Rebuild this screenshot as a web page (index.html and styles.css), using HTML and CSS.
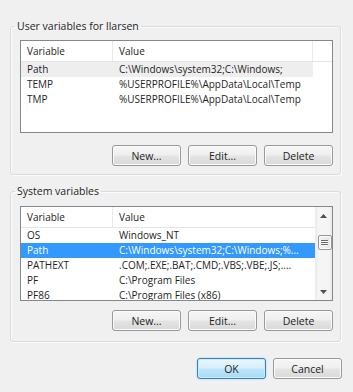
FILE: index.html
```html
<!DOCTYPE html>
<html>
<head>
<meta charset="utf-8">
<link rel="stylesheet" href="styles.css">
</head>
<body>
<div class="dialog">
  <fieldset class="group group-user">
    <legend>User variables for llarsen</legend>
    <div class="list list-user">
      <div class="lv-body">
        <div class="lv-header"><span class="c1">Variable</span><span class="c2">Value</span><span class="c3"></span></div>
        <div class="row hot"><span class="c1">Path</span><span class="c2">C:\Windows\system32;C:\Windows;</span></div>
        <div class="row"><span class="c1">TEMP</span><span class="c2">%USERPROFILE%\AppData\Local\Temp</span></div>
        <div class="row"><span class="c1">TMP</span><span class="c2">%USERPROFILE%\AppData\Local\Temp</span></div>
      </div>
    </div>
    <div class="buttons">
      <button class="btn">New...</button>
      <button class="btn">Edit...</button>
      <button class="btn">Delete</button>
    </div>
  </fieldset>

  <fieldset class="group group-system">
    <legend>System variables</legend>
    <div class="list list-system">
      <div class="lv-body">
        <div class="lv-header"><span class="c1">Variable</span><span class="c2">Value</span></div>
        <div class="row"><span class="c1">OS</span><span class="c2">Windows_NT</span></div>
        <div class="row selected"><span class="c1">Path</span><span class="c2">C:\Windows\system32;C:\Windows;%...</span></div>
        <div class="row"><span class="c1">PATHEXT</span><span class="c2">.COM;.EXE;.BAT;.CMD;.VBS;.VBE;.JS;....</span></div>
        <div class="row"><span class="c1">PF</span><span class="c2">C:\Program Files</span></div>
        <div class="row"><span class="c1">PF86</span><span class="c2">C:\Program Files (x86)</span></div>
      </div>
      <div class="scrollbar">
        <div class="sb-arrow">
          <svg width="7" height="4" viewBox="0 0 7 4"><path d="M0 4 L3.5 0 L7 4 Z" fill="#505050"/></svg>
        </div>
        <div class="sb-track">
          <div class="sb-thumb"><span class="grip"></span><span class="grip"></span><span class="grip"></span></div>
        </div>
        <div class="sb-arrow">
          <svg width="7" height="4" viewBox="0 0 7 4"><path d="M0 0 L7 0 L3.5 4 Z" fill="#505050"/></svg>
        </div>
      </div>
    </div>
    <div class="buttons">
      <button class="btn">New...</button>
      <button class="btn">Edit...</button>
      <button class="btn">Delete</button>
    </div>
  </fieldset>

  <div class="footer">
    <button class="btn btn-default">OK</button>
    <button class="btn">Cancel</button>
  </div>
</div>
</body>
</html>
```

FILE: styles.css
```css
* { box-sizing: border-box; }

html, body {
  margin: 0;
  padding: 0;
  background: #f0f0f0;
}

body {
  width: 353px;
  height: 392px;
  overflow: hidden;
  font-family: "Open Sans", "Noto Sans", sans-serif;
  font-size: 10px;
  color: #1e1e1e;
}

.dialog {
  padding: 19px 12px 0 10px;
}

.group {
  margin: 0;
  padding: 7px 7px 8px 9px;
  border: 1px solid #d9dcdf;
  border-radius: 3px;
  box-shadow: inset 1px 1px 0 #fbfbfb, 1px 1px 0 #fbfbfb;
  min-width: 0;
}

.group-system {
  margin-top: 9px;
  padding-top: 8px;
  padding-bottom: 10px;
}

.group legend {
  padding: 0 2px;
  margin-left: -5px;
  line-height: 14px;
  font-size: 10.5px;
  color: #1e1e1e;
}

.list {
  display: flex;
  background: #fff;
  border: 1px solid #828790;
  overflow: hidden;
}

.list-user { height: 93px; }
.list-system { height: 95px; }

.lv-body {
  flex: 1;
  min-width: 0;
}

.lv-header {
  display: flex;
  height: 21px;
  align-items: center;
  border-bottom: 1px solid #e5e5e5;
  background: #fff;
}

.lv-header span {
  height: 100%;
  display: flex;
  align-items: center;
  border-right: 1px solid #eaeaea;
}

.lv-header .c3 {
  flex: 1;
  border-right: none;
}

.c1 {
  width: 92px;
  padding-left: 6px;
  flex: none;
}

.c2 {
  width: 200px;
  padding-left: 6px;
  flex: none;
  white-space: nowrap;
  overflow: hidden;
}

.row {
  display: flex;
  height: 15px;
  line-height: 15px;
  white-space: nowrap;
}

.list-system .row .c2 { width: 203px; }
.list-system .lv-header .c2 { width: 203px; border-right: none; }

.row.hot {
  background: #eeeeee;
  width: 292px;
}

.row.selected {
  background: #3399ff;
  color: #fff;
}

.scrollbar {
  width: 17px;
  flex: none;
  display: flex;
  flex-direction: column;
  background: linear-gradient(to right, #eaeaea, #f5f5f5 20%, #f5f5f5 80%, #eaeaea);
}

.sb-arrow {
  height: 17px;
  display: flex;
  align-items: center;
  justify-content: center;
}

.sb-track {
  flex: 1;
  padding-top: 11px;
  display: flex;
  flex-direction: column;
  align-items: center;
}

.sb-thumb {
  width: 14px;
  height: 15px;
  margin-left: 2px;
  border: 1px solid #979797;
  border-radius: 2px;
  background: linear-gradient(to right, #f2f2f2, #e4e4e4);
  box-shadow: inset 0 0 0 1px #fafafa;
  display: flex;
  flex-direction: column;
  align-items: center;
  justify-content: center;
  gap: 1px;
}

.grip {
  width: 7px;
  height: 1px;
  background: #6a6a6a;
  box-shadow: 0 1px 0 #fff;
}

.buttons {
  display: flex;
  justify-content: flex-end;
  gap: 7px;
  margin-top: 12px;
}

.group-system .buttons { margin-top: 9px; }

.btn {
  width: 69px;
  height: 21px;
  padding: 0;
  font-family: inherit;
  font-size: 10.5px;
  color: #1e1e1e;
  border: 1px solid #999999;
  border-radius: 3px;
  background: linear-gradient(#f6f6f6 0%, #efefef 48%, #e4e4e4 52%, #d9d9d9 100%);
  box-shadow: inset 0 0 0 1px #fbfbfb;
}

.footer {
  display: flex;
  justify-content: flex-end;
  gap: 7px;
  margin-top: 16px;
  margin-right: -1px;
}

.btn-default {
  border-color: #3c7fb1;
  background: linear-gradient(#eaf6fd 0%, #d9f0fc 48%, #bee6fd 52%, #a7d9f5 100%);
  box-shadow: inset 0 0 0 1px #c9ecfb, 0 0 2px #8fd3f7;
}
```
